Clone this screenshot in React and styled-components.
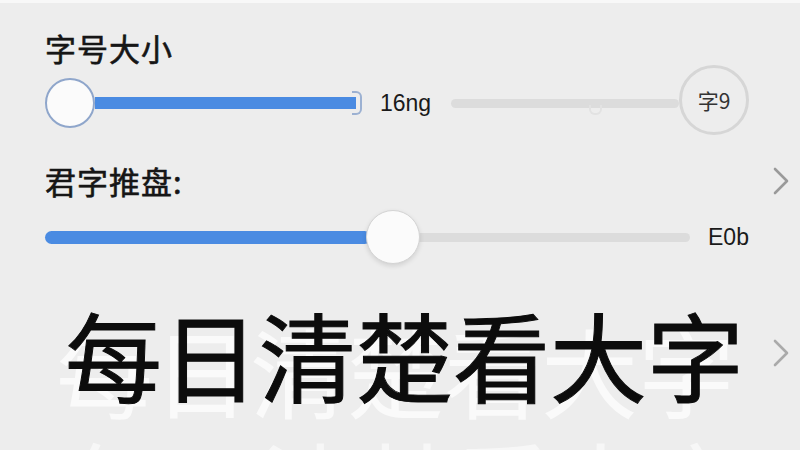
import styled, { createGlobalStyle } from 'styled-components'

const GlobalStyle = createGlobalStyle`
  html, body {
    margin: 0;
    padding: 0;
    background: #ededed;
  }
  body {
    font-family: "Noto Sans CJK SC", "Noto Sans", sans-serif;
  }
`

const Page = styled.div`
  width: 800px;
  height: 450px;
  box-sizing: border-box;
  overflow: hidden;
  background: #ededed;
  border-top: 3px solid #f8f8f8;
  padding: 0 10px 0 45px;
  display: flex;
  flex-direction: column;
`

const LabelRow = styled.div`
  display: flex;
  align-items: center;
  justify-content: space-between;
  margin-top: ${props => props.top}px;
  height: 40px;
`

const Label = styled.div`
  font-size: 31px;
  line-height: 40px;
  font-weight: 400;
  -webkit-text-stroke: 0.6px #161616;
  color: #161616;
  letter-spacing: 1px;
`

const SliderRow = styled.div`
  display: flex;
  align-items: center;
  height: ${props => props.h}px;
  margin-top: ${props => props.top}px;
`

const Thumb = styled.div`
  flex: none;
  width: ${props => props.size}px;
  height: ${props => props.size}px;
  border-radius: 50%;
  background: #fbfbfb;
  box-sizing: border-box;
  border: ${props => props.ring ? '2px solid #8fa6cb' : '1px solid #d4d4d4'};
  box-shadow: ${props => props.ring ? 'none' : '0 2px 5px rgba(0,0,0,0.12)'};
  position: relative;
  z-index: 1;
  margin: 0 ${props => props.overlap || 0}px;
`

const Fill = styled.div`
  flex: none;
  width: ${props => props.w}px;
  height: ${props => props.h}px;
  background: #4a8be2;
  border-radius: ${props => props.round ? '7px' : '0'};
`

const EndCap = styled.div`
  flex: none;
  width: 8px;
  height: 20px;
  margin-left: -4px;
  border: 2px solid #9cb1d2;
  border-left: none;
  border-radius: 0 6px 6px 0;
`

const Track = styled.div`
  flex: none;
  position: relative;
  width: ${props => props.w}px;
  height: ${props => props.h}px;
  background: #dcdcdc;
  border-radius: 5px;
`

const Loop = styled.div`
  position: absolute;
  left: 138px;
  top: 6px;
  width: 9px;
  height: 8px;
  border: 2px solid #e2e2e2;
  border-top: none;
  border-radius: 0 0 6px 6px;
`

const Value = styled.div`
  flex: none;
  font-family: "Liberation Sans", "Noto Sans", sans-serif;
  font-size: 23px;
  color: #1a1a1a;
  margin: 0 ${props => props.right}px 0 ${props => props.left}px;
`

const Badge = styled.div`
  flex: none;
  width: 70px;
  height: 70px;
  margin-top: -6px;
  border-radius: 50%;
  box-sizing: border-box;
  border: 3px solid #d6d6d6;
  display: flex;
  align-items: center;
  justify-content: center;
  font-size: 21px;
  color: #333;
  font-family: "Noto Sans CJK SC", "Liberation Sans", sans-serif;
`

const Chevron = ({ color = '#9a9a9a' }) => (
  <svg width="18" height="30" viewBox="0 0 18 30">
    <path d="M3 3 L15 15 L3 27" fill="none" stroke={color} strokeWidth="2.6" strokeLinecap="round" strokeLinejoin="round" />
  </svg>
)

const TitleRow = styled.div`
  display: flex;
  align-items: center;
  justify-content: space-between;
  margin-top: 40px;
`

const Title = styled.div`
  padding-left: 20px;
  font-size: 97px;
  line-height: 97px;
  font-weight: 400;
  -webkit-text-stroke: 1px #0c0c0c;
  color: #0c0c0c;
  white-space: nowrap;
  text-shadow:
    -9px 16px 0 rgba(255, 255, 255, 0.7),
    2px 130px 0 rgba(255, 255, 255, 0.55);
`

export default function App() {
  return (
    <>
      <GlobalStyle />
      <Page>
        <LabelRow top={25}>
          <Label>字号大小</Label>
        </LabelRow>
        <SliderRow h={56} top={7}>
          <Thumb size={50} ring />
          <Fill w={261} h={12} />
          <EndCap />
          <Value left={18} right={20}>16ng</Value>
          <Track w={228} h={9}>
            <Loop />
          </Track>
          <Badge>字9</Badge>
        </SliderRow>
        <LabelRow top={30}>
          <Label>君字推盘:</Label>
          <Chevron />
        </LabelRow>
        <SliderRow h={54} top={9}>
          <Fill w={326} h={13} round />
          <Thumb size={54} overlap={-5} />
          <Track w={275} h={9} />
          <Value left={18} right={0}>E0b</Value>
        </SliderRow>
        <TitleRow>
          <Title>每日清楚看大字</Title>
          <Chevron color="#aaaaaa" />
        </TitleRow>
      </Page>
    </>
  )
}
